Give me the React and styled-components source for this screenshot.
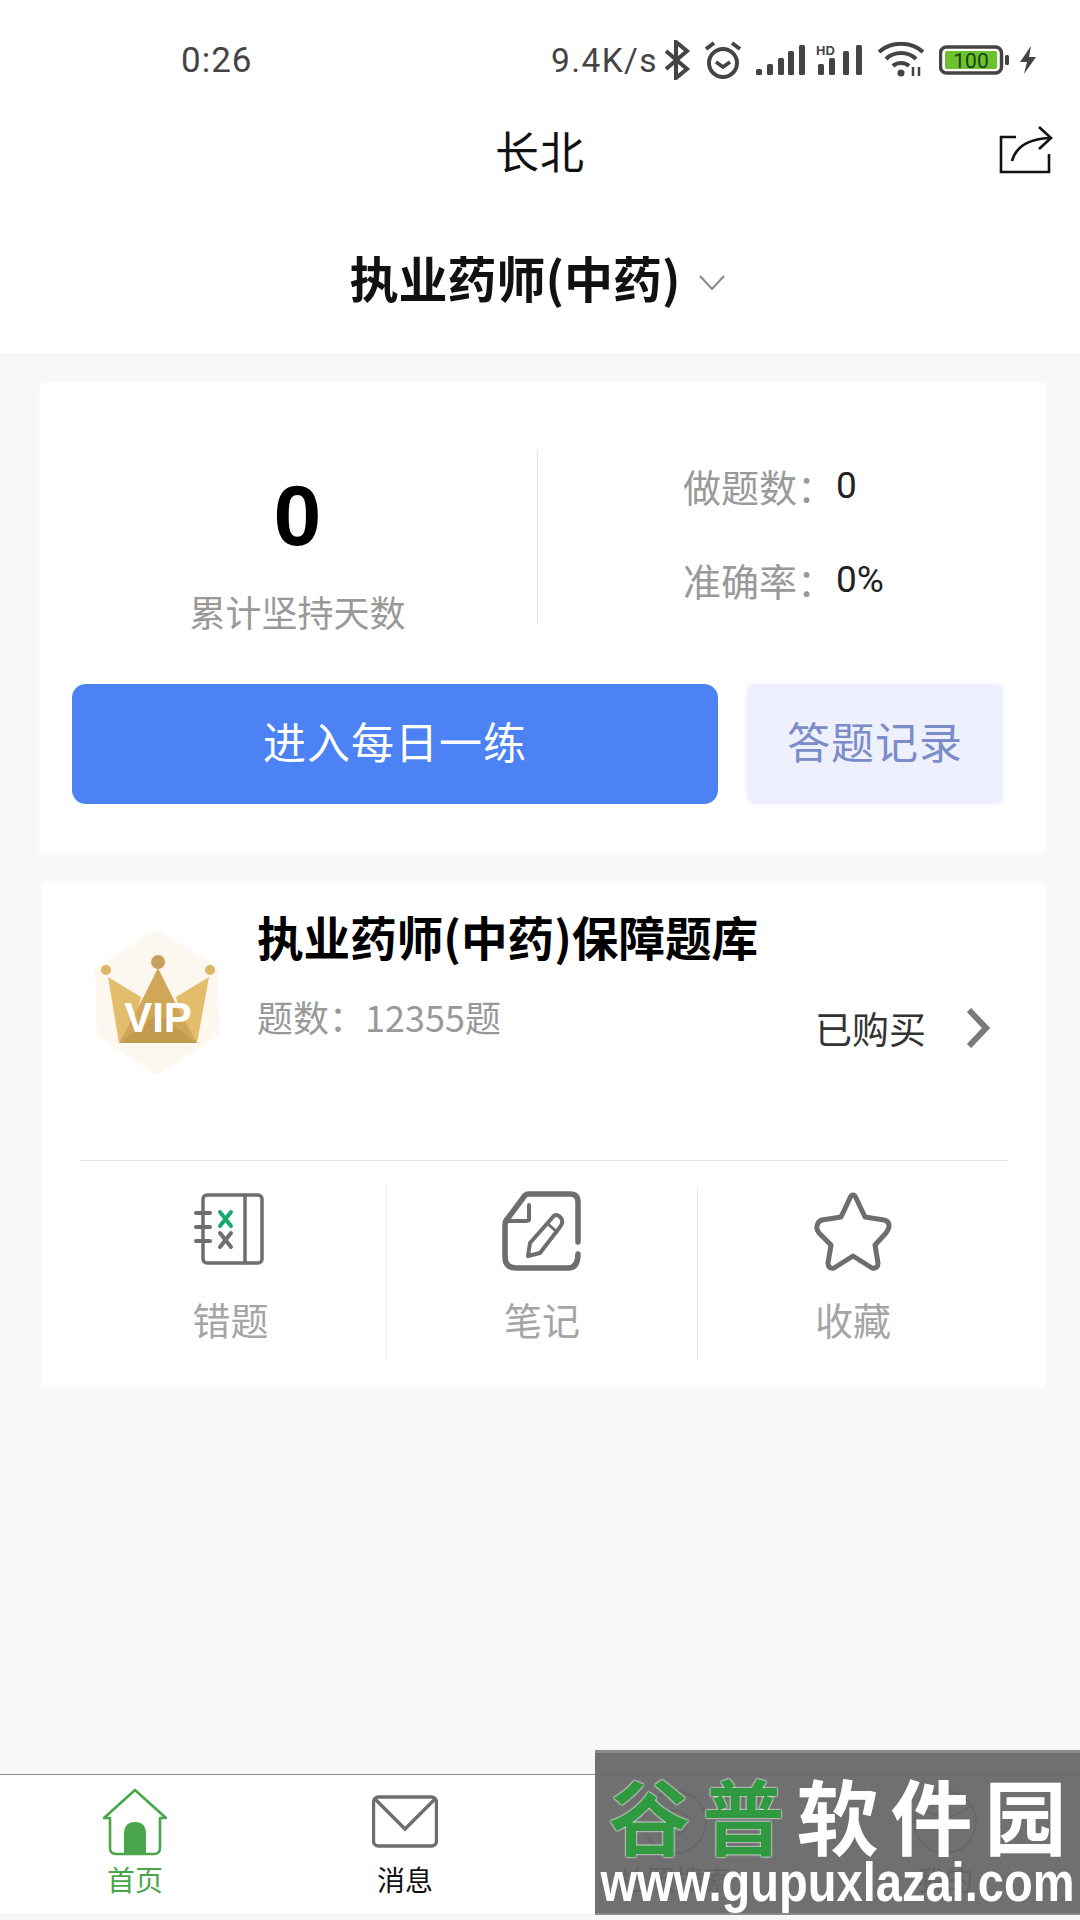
import React from 'react';
import styled, { createGlobalStyle } from 'styled-components';

const GlobalStyle = createGlobalStyle`
	html, body {
		margin: 0;
		padding: 0;
		background: #f7f7f7;
	}
	* {
		box-sizing: border-box;
	}
`;

const Page = styled.div`
	position: relative;
	display: flex;
	flex-direction: column;
	width: 1080px;
	height: 1920px;
	overflow: hidden;
	background: #f7f7f7;
	font-family: 'Noto Sans CJK SC', 'Noto Sans', sans-serif;
`;

const Header = styled.header`
	background: #fff;
`;

const StatusBar = styled.div`
	display: flex;
	align-items: center;
	height: 100px;
	padding: 20px 43px 0 181px;
	color: #444;
	font-family: Roboto, sans-serif;
`;

const Clock = styled.span`
	font-size: 35px;
	letter-spacing: 1px;
	margin-right: auto;
`;

const Speed = styled.span`
	font-size: 33.5px;
	letter-spacing: 1.4px;
	margin-right: 5px;
`;

const StatusIcon = styled.svg`
	display: block;
	flex: none;
	margin-left: ${(p) => p.$gap || 0}px;
`;

const NavBar = styled.div`
	display: grid;
	grid-template-columns: 1fr auto 1fr;
	align-items: center;
	height: 104px;
	padding: 0 27px 4px;
`;

const NavTitle = styled.h1`
	margin: 0;
	font-size: 44px;
	font-weight: 400;
	color: #111;
	letter-spacing: 1px;
`;

const ShareButton = styled.svg`
	justify-self: end;
`;

const Selector = styled.div`
	display: flex;
	align-items: center;
	justify-content: center;
	gap: 18px;
	height: 149px;
	padding: 0 6px 4px 0;
	font-size: 49px;
	font-weight: 700;
	color: #111;
`;

const SelectorArrow = styled.svg`
	margin-top: 12px;
`;

const Card = styled.section`
	margin: 30px 35px 0 ${(p) => p.$left}px;
	background: #fff;
	box-shadow: 0 0 8px 2px rgba(252, 252, 252, 0.9);
`;

const PracticeCard = styled(Card)`
	padding: 67px 0 49px;
`;

const StatsRow = styled.div`
	display: grid;
	grid-template-columns: 498px 1fr;
	grid-template-rows: 175px;
`;

const Streak = styled.div`
	display: flex;
	flex-direction: column;
	align-items: center;
	height: 175px;
	border-right: 1px solid #e6e6e6;
	padding-left: 18px;
`;

const StreakValue = styled.div`
	font-family: 'Liberation Sans', sans-serif;
	font-size: 86px;
	line-height: 86px;
	font-weight: 700;
	color: #000;
	margin-top: 22px;
`;

const StreakLabel = styled.div`
	font-size: 36px;
	line-height: 46px;
	color: #999;
	margin-top: 30px;
`;

const Totals = styled.div`
	display: flex;
	flex-direction: column;
	gap: 48px;
	padding: 12px 0 0 145px;
`;

const TotalRow = styled.div`
	display: flex;
	align-items: center;
	height: 46px;
	font-size: 38px;
	color: #999;
`;

const TotalValue = styled.span`
	font-family: Roboto, sans-serif;
	font-size: 37px;
	color: #222;
	margin-left: 1px;
`;

const Actions = styled.div`
	display: flex;
	gap: 29px;
	margin: 59px 0 0 32px;
`;

const ActionButton = styled.button`
	width: ${(p) => p.$width}px;
	height: 120px;
	padding: 0 0 9px;
	border: 0;
	border-radius: ${(p) => (p.$primary ? 14 : 8)}px;
	background: ${(p) => (p.$primary ? '#4d82f5' : '#eff0fd')};
	box-shadow: ${(p) => (p.$primary ? 'none' : '0 0 6px rgba(239, 240, 253, 0.9)')};
	color: ${(p) => (p.$primary ? '#fff' : '#7b8cc9')};
	font-family: inherit;
	font-size: 43px;
	letter-spacing: 1px;
`;

const BankCard = styled(Card)`
	padding-bottom: 25px;
`;

const BankInfo = styled.div`
	display: flex;
	gap: 37px;
	height: 277px;
	padding: 47px 55px 0 53px;
`;

const BankBody = styled.div`
	flex: 1;
	margin-top: -24px;
`;

const BankTitle = styled.h2`
	margin: 0;
	font-size: 46.6px;
	line-height: 60px;
	font-weight: 700;
	color: #000;
`;

const BankMeta = styled.div`
	display: flex;
	align-items: flex-start;
	justify-content: space-between;
	margin-top: 27px;
`;

const BankCount = styled.div`
	font-size: 36px;
	line-height: 46px;
	color: #999;
`;

const Purchased = styled.div`
	display: flex;
	align-items: center;
	gap: 40px;
	margin-top: 12px;
	font-size: 37px;
	line-height: 46px;
	color: #333;
`;

const Rule = styled.div`
	height: 1px;
	margin: 0 37px 0 38px;
	background: #e4e4e4;
`;

const Tools = styled.div`
	display: grid;
	grid-template-columns: repeat(3, 311px);
	margin: 25px 0 0 33px;
`;

const Tool = styled.div`
	display: flex;
	flex-direction: column;
	align-items: center;
	height: 175px;
	padding-top: 5px;
	& + & {
		border-left: 1px solid #e8e8e8;
	}
`;

const ToolLabel = styled.div`
	margin-top: 23px;
	font-size: 38px;
	line-height: 50px;
	color: #a5a5a5;
`;

const TabBar = styled.nav`
	display: grid;
	grid-template-columns: repeat(4, 270px);
	height: 139px;
	margin-top: auto;
	margin-bottom: 7px;
	border-top: 1px solid #8c8c8c;
	background: #fff;
`;

const Tab = styled.div`
	display: flex;
	flex-direction: column;
	align-items: center;
	padding-top: 13px;
`;

const TabIcon = styled.svg`
	display: block;
	flex: none;
`;

const TabLabel = styled.div`
	margin-top: 4px;
	font-size: 28px;
	line-height: 38px;
	color: ${(p) => (p.$active ? '#4aa64a' : '#111')};
`;

const Watermark = styled.div`
	position: absolute;
	top: 1750px;
	right: 0;
	width: 485px;
	height: 165px;
	overflow: hidden;
	background: rgba(104, 104, 104, 0.95);
	border-top: 3px solid #8a8a8a;
	border-bottom: 2px solid #8a8a8a;
`;

const WatermarkName = styled.div`
	display: flex;
	justify-content: center;
	margin-top: 15px;
	font-size: 82px;
	line-height: 92px;
	font-weight: 700;
	letter-spacing: 12px;
	padding-left: 12px;
	white-space: nowrap;
	color: #fff;
`;

const WatermarkAccent = styled.span`
	color: #2f9a3f;
	text-shadow: 0 0 2px #fff, 0 0 2px #fff;
`;

const WatermarkUrl = styled.div`
	display: flex;
	justify-content: center;
	margin-top: -8px;
	font-family: 'Liberation Sans', sans-serif;
	font-size: 56px;
	line-height: 60px;
	font-weight: 700;
	white-space: nowrap;
	color: #fff;
	transform: scaleX(0.84);
`;

const Bluetooth = () => (
	<StatusIcon width="28" height="40" viewBox="0 0 28 40" fill="none" stroke="#444" strokeWidth="4" $gap={0}>
		<path d="M3 11 L24 29 L13 38 V2 L24 11 L3 29" />
	</StatusIcon>
);

const Alarm = () => (
	<StatusIcon width="40" height="40" viewBox="0 0 40 40" fill="none" stroke="#444" $gap={12}>
		<circle cx="20" cy="23" r="14" strokeWidth="4" />
		<path d="M13 22 L20 27 L27 22" strokeWidth="3.5" />
		<path d="M3 9 L11 3 M37 9 L29 3" strokeWidth="4" />
	</StatusIcon>
);

const SignalFive = () => (
	<StatusIcon width="50" height="32" viewBox="0 0 50 32" fill="#444" $gap={13}>
		<rect x="0" y="25" width="6" height="6" rx="1.5" />
		<rect x="11" y="20" width="6" height="11" rx="1.5" />
		<rect x="22" y="14" width="6" height="17" rx="1.5" />
		<rect x="32" y="7" width="6" height="24" rx="1.5" />
		<rect x="43" y="1" width="6" height="30" rx="1.5" />
	</StatusIcon>
);

const SignalHd = () => (
	<StatusIcon width="48" height="32" viewBox="0 0 48 32" fill="#444" $gap={10}>
		<rect x="2" y="20" width="6" height="11" rx="1.5" />
		<rect x="13" y="14" width="6" height="17" rx="1.5" />
		<rect x="27" y="7" width="6" height="24" rx="1.5" />
		<rect x="40" y="1" width="6" height="30" rx="1.5" />
		<text x="0" y="11" fontFamily="Liberation Sans, sans-serif" fontSize="13" fontWeight="700">
			HD
		</text>
	</StatusIcon>
);

const Wifi = () => (
	<StatusIcon width="48" height="36" viewBox="0 0 48 36" fill="none" stroke="#444" strokeWidth="4" $gap={13}>
		<path d="M2 10 C14 -1 34 -1 46 10" />
		<path d="M9 17 C17 9 31 9 39 17" />
		<path d="M16 24 C20 20 28 20 32 24" />
		<circle cx="24" cy="31" r="3.5" fill="#444" stroke="none" />
		<path d="M36 25 V34 M42 25 V34" strokeWidth="2.5" />
	</StatusIcon>
);

const Battery = () => (
	<StatusIcon width="72" height="30" viewBox="0 0 72 30" $gap={14}>
		<rect x="1.5" y="2" width="61" height="26" rx="6" fill="#fff" stroke="#444" strokeWidth="3.5" />
		<rect x="6" y="6" width="52" height="18" rx="2" fill="#6cc12e" />
		<rect x="66" y="10" width="4" height="10" rx="1.5" fill="#444" />
		<text x="32" y="22.5" textAnchor="middle" fontFamily="Roboto, sans-serif" fontSize="21" fill="#1f3f0c">
			100
		</text>
	</StatusIcon>
);

const Bolt = () => (
	<StatusIcon width="18" height="30" viewBox="0 0 18 30" fill="#444" $gap={8}>
		<path d="M12 1 L1 17 H8 L5 29 L17 12 H10 Z" />
	</StatusIcon>
);

const ShareIcon = () => (
	<ShareButton width="54" height="50" viewBox="0 0 54 50" fill="none" stroke="#111" strokeWidth="2.6">
		<path d="M17 12 H2 V47 H50 V29" />
		<path d="M13 36 C17 22 28 14 50 13" />
		<path d="M40 2 L52 13 L40 24" />
	</ShareButton>
);

const VipBadge = () => (
	<svg width="125" height="145" viewBox="0 0 125 145" style={{ flex: 'none' }}>
		<path d="M62 0 L122 36 L125 104 L62 145 L2 106 L0 38 Z" fill="#fdf8ef" />
		<path d="M13 47 L46 67 L36 113 H24 Z" fill="#e3bd6c" />
		<path d="M114 47 L81 67 L91 113 H102 Z" fill="#e3bd6c" />
		<path d="M63 38 L87 86 L102 113 H24 L40 84 Z" fill="#cfa757" />
		<path d="M24 113 L63 84 L102 113 Z" fill="#c49b4e" />
		<circle cx="11" cy="40" r="5" fill="#ddb567" />
		<circle cx="63" cy="32" r="7" fill="#c7a15b" />
		<circle cx="115" cy="40" r="5" fill="#ddb567" />
		<text
			x="63"
			y="102"
			textAnchor="middle"
			fontFamily="Liberation Sans, sans-serif"
			fontSize="42"
			fontWeight="700"
			fill="#fff"
		>
			VIP
		</text>
	</svg>
);

const WrongIcon = () => (
	<svg width="80" height="80" viewBox="-5 0 80 80" fill="none" stroke="#6e6e6e" strokeWidth="3.5" strokeLinecap="round">
		<rect x="7" y="4" width="59" height="68" rx="4" />
		<path d="M49 4 V72" />
		<path d="M0 22 H14 M0 36 H14 M0 50 H14" strokeWidth="4" />
		<path d="M24 21 L35 35 M35 21 L24 35" stroke="#17a86c" strokeWidth="4" />
		<path d="M24 42 L35 56 M35 42 L24 56" strokeWidth="4" />
	</svg>
);

const NoteIcon = () => (
	<svg width="80" height="80" viewBox="0 0 80 80" fill="none" stroke="#6e6e6e" strokeWidth="5.5" strokeLinecap="round" strokeLinejoin="round">
		<path d="M76 51 V11 Q76 3 68 3 H27 Q23 3 21 7 L6 27 Q3 30 3 34 V66 Q3 77 14 77 H66 Q76 77 76 63" />
		<path d="M27 14 V29 Q27 30 23 30 H5" strokeWidth="4" />
		<path d="M50 27 Q54 21 59 27 Q62 31 58 36 L38 62 L26 65 L28 52 Z" strokeWidth="4" />
		<path d="M46 33 L55 41" strokeWidth="3" />
	</svg>
);

const StarIcon = () => (
	<svg width="80" height="80" viewBox="0 0 80 80" fill="none" stroke="#6e6e6e" strokeWidth="5" strokeLinejoin="round">
		<path d="M40 4 Q42 4 43 7 L52 26 L71 29 Q76 30 76 35 Q76 38 73 42 L62 54 L65 72 Q65 78 59 77 L40 65 L21 77 Q15 78 15 72 L18 54 L6 42 Q3 38 4 35 Q5 30 9 29 L28 26 L37 7 Q38 4 40 4 Z" />
	</svg>
);

const Chevron = () => (
	<svg width="24" height="40" viewBox="0 0 24 40" fill="none" stroke="#7a7a7a" strokeWidth="6">
		<path d="M3 2 L20 20 L3 38" />
	</svg>
);

const tools = [
	{ label: '错题', icon: <WrongIcon /> },
	{ label: '笔记', icon: <NoteIcon /> },
	{ label: '收藏', icon: <StarIcon /> }
];

const App = () => {
	return (
		<Page>
			<GlobalStyle />
			<Header>
				<StatusBar>
					<Clock>0:26</Clock>
					<Speed>9.4K/s</Speed>
					<Bluetooth />
					<Alarm />
					<SignalFive />
					<SignalHd />
					<Wifi />
					<Battery />
					<Bolt />
				</StatusBar>
				<NavBar>
					<span />
					<NavTitle>长北</NavTitle>
					<ShareIcon />
				</NavBar>
				<Selector>
					执业药师(中药)
					<SelectorArrow width="26" height="16" viewBox="0 0 26 16" fill="none" stroke="#888" strokeWidth="2">
						<path d="M1 1 L13 14 L25 1" />
					</SelectorArrow>
				</Selector>
			</Header>

			<PracticeCard $left={40}>
				<StatsRow>
					<Streak>
						<StreakValue>0</StreakValue>
						<StreakLabel>累计坚持天数</StreakLabel>
					</Streak>
					<Totals>
						<TotalRow>
							做题数：<TotalValue>0</TotalValue>
						</TotalRow>
						<TotalRow>
							准确率：<TotalValue>0%</TotalValue>
						</TotalRow>
					</Totals>
				</StatsRow>
				<Actions>
					<ActionButton $primary $width={646}>
						进入每日一练
					</ActionButton>
					<ActionButton $width={256}>答题记录</ActionButton>
				</Actions>
			</PracticeCard>

			<BankCard $left={42}>
				<BankInfo>
					<VipBadge />
					<BankBody>
						<BankTitle>执业药师(中药)保障题库</BankTitle>
						<BankMeta>
							<BankCount>题数：12355题</BankCount>
							<Purchased>
								已购买
								<Chevron />
							</Purchased>
						</BankMeta>
					</BankBody>
				</BankInfo>
				<Rule />
				<Tools>
					{tools.map((tool) => (
						<Tool key={tool.label}>
							{tool.icon}
							<ToolLabel>{tool.label}</ToolLabel>
						</Tool>
					))}
				</Tools>
			</BankCard>

			<TabBar>
				<Tab>
					<TabIcon width="64" height="68" viewBox="0 0 64 68" fill="none" stroke="#4aa64a" strokeWidth="2.6">
						<path d="M1 30 L32 2 L63 30 L57 30 V60 Q57 66 51 66 H13 Q7 66 7 60 V30 Z" strokeLinejoin="round" />
						<path d="M21 66 V46 Q21 34 32 34 Q43 34 43 46 V66 Z" fill="#4aa64a" stroke="none" />
					</TabIcon>
					<TabLabel $active>首页</TabLabel>
				</Tab>
				<Tab>
					<TabIcon width="66" height="68" viewBox="0 0 66 68" fill="none" stroke="#6e6e6e" strokeWidth="3.4">
						<rect x="1.5" y="9" width="63" height="49" rx="5" />
						<path d="M3 11 L33 41 L63 11" />
					</TabIcon>
					<TabLabel>消息</TabLabel>
				</Tab>
				<Tab>
					<TabIcon width="66" height="68" viewBox="0 0 66 68" fill="none" stroke="#555" strokeWidth="2">
						<circle cx="33" cy="34" r="31" />
						<circle cx="33" cy="34" r="12" />
					</TabIcon>
					<TabLabel>拍照搜索</TabLabel>
				</Tab>
				<Tab>
					<TabIcon width="66" height="68" viewBox="0 0 66 68" fill="none" stroke="#555" strokeWidth="2">
						<circle cx="33" cy="34" r="31" />
						<path d="M8 18 C24 32 42 32 58 18 M33 30 V65" />
					</TabIcon>
					<TabLabel>我的</TabLabel>
				</Tab>
			</TabBar>

			<Watermark>
				<WatermarkName>
					<WatermarkAccent>谷普</WatermarkAccent>软件园
				</WatermarkName>
				<WatermarkUrl>www.gupuxlazai.com</WatermarkUrl>
			</Watermark>
		</Page>
	);
};

export default App;
